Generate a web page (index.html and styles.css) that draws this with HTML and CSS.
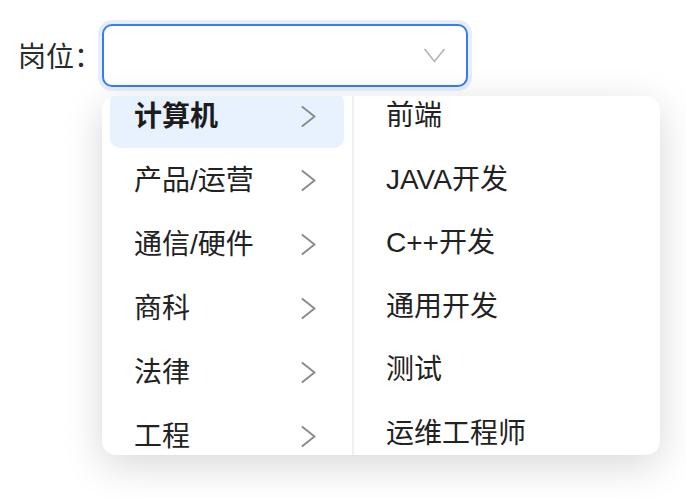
FILE: index.html
```html
<!DOCTYPE html>
<html lang="zh-CN">
<head>
<meta charset="utf-8">
<title>岗位</title>
<link rel="stylesheet" href="styles.css">
</head>
<body>
<div class="field">
  <span class="label">岗位：</span>
  <div class="select-wrap">
    <div class="select">
      <svg class="arrow-down" width="21" height="15" viewBox="0 0 21 15"><path d="M1 1.5 L10.5 13.5 L20 1.5" fill="none" stroke="#b5b5b5" stroke-width="1.6" stroke-linecap="round" stroke-linejoin="round"/></svg>
    </div>
    <div class="panel">
      <div class="col-left">
        <div class="opt active"><span>计算机</span><svg class="arrow-right" width="15" height="21" viewBox="0 0 15 21"><path d="M1.5 1 L13.5 10.5 L1.5 20" fill="none" stroke="#8c8c8c" stroke-width="2" stroke-linecap="round" stroke-linejoin="round"/></svg></div>
        <div class="opt"><span>产品/运营</span><svg class="arrow-right" width="15" height="21" viewBox="0 0 15 21"><path d="M1.5 1 L13.5 10.5 L1.5 20" fill="none" stroke="#8c8c8c" stroke-width="2" stroke-linecap="round" stroke-linejoin="round"/></svg></div>
        <div class="opt"><span>通信/硬件</span><svg class="arrow-right" width="15" height="21" viewBox="0 0 15 21"><path d="M1.5 1 L13.5 10.5 L1.5 20" fill="none" stroke="#8c8c8c" stroke-width="2" stroke-linecap="round" stroke-linejoin="round"/></svg></div>
        <div class="opt"><span>商科</span><svg class="arrow-right" width="15" height="21" viewBox="0 0 15 21"><path d="M1.5 1 L13.5 10.5 L1.5 20" fill="none" stroke="#8c8c8c" stroke-width="2" stroke-linecap="round" stroke-linejoin="round"/></svg></div>
        <div class="opt"><span>法律</span><svg class="arrow-right" width="15" height="21" viewBox="0 0 15 21"><path d="M1.5 1 L13.5 10.5 L1.5 20" fill="none" stroke="#8c8c8c" stroke-width="2" stroke-linecap="round" stroke-linejoin="round"/></svg></div>
        <div class="opt"><span>工程</span><svg class="arrow-right" width="15" height="21" viewBox="0 0 15 21"><path d="M1.5 1 L13.5 10.5 L1.5 20" fill="none" stroke="#8c8c8c" stroke-width="2" stroke-linecap="round" stroke-linejoin="round"/></svg></div>
      </div>
      <div class="divider"></div>
      <div class="col-right">
        <div class="sub">前端</div>
        <div class="sub">JAVA开发</div>
        <div class="sub">C++开发</div>
        <div class="sub">通用开发</div>
        <div class="sub">测试</div>
        <div class="sub">运维工程师</div>
      </div>
    </div>
  </div>
</div>
</body>
</html>
```
FILE: styles.css
```css
* { box-sizing: border-box; }
html, body { margin: 0; padding: 0; background: #ffffff; }
body {
  font-family: "Liberation Sans", "Noto Sans CJK SC", sans-serif;
  color: #222222;
  width: 686px;
  height: 498px;
  overflow: hidden;
}
.field {
  display: flex;
  align-items: center;
  padding: 24px 0 0 18px;
}
.label {
  font-size: 28px;
  line-height: 40px;
  padding-top: 4px;
  color: #2a2a2a;
}
.select-wrap {
  position: relative;
}
.select {
  width: 366px;
  height: 63px;
  border: 2px solid #3a7af3;
  border-radius: 10px;
  box-shadow: 0 0 0 4px #e5eefc;
  background: #ffffff;
  display: flex;
  align-items: center;
  justify-content: flex-end;
  padding-right: 21px;
}
.arrow-down { display: block; margin-top: 0; }
.panel {
  position: absolute;
  left: 0;
  top: 72px;
  width: 558px;
  height: 359px;
  background: #ffffff;
  border-radius: 14px;
  box-shadow: 0 10px 40px rgba(0, 0, 0, 0.16);
  overflow: hidden;
  display: flex;
  z-index: 2;
}
.col-left {
  width: 250px;
  flex: none;
  padding: 0 8px;
}
.opt {
  height: 56px;
  margin-bottom: 8px;
  padding: 3px 28px 9px 24px;
  display: flex;
  align-items: center;
  justify-content: space-between;
  border-radius: 10px;
  font-size: 28px;
  line-height: 40px;
}
.opt:first-child { margin-top: -4px; }
.opt.active {
  background: #e8f2fe;
  font-weight: 700;
  color: #1c1c1c;
}
.arrow-right { display: block; margin-top: -2px; }
.divider {
  width: 2px;
  flex: none;
  background: #f0f0f0;
}
.col-right {
  flex: 1;
  padding-left: 32px;
}
.sub {
  height: 63.6px;
  padding-top: 5px;
  display: flex;
  align-items: center;
  font-size: 28px;
  line-height: 40px;
}
.sub:first-child { margin-top: -14.4px; }
```
